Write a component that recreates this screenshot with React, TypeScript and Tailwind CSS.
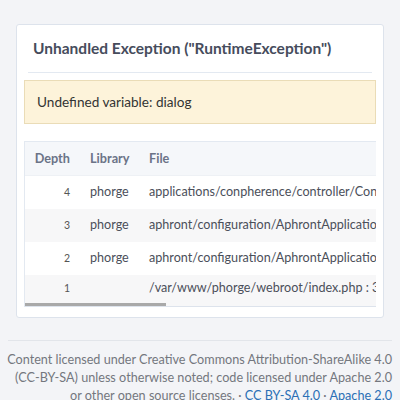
import React from "react";

const rows = [
  { d: "4", lib: "phorge", file: "applications/conpherence/controller/ConpherenceUpdateController.php : 212", bg: "bg-white" },
  { d: "3", lib: "phorge", file: "aphront/configuration/AphrontApplicationConfiguration.php : 293", bg: "bg-[#f7f7f8]" },
  { d: "2", lib: "phorge", file: "aphront/configuration/AphrontApplicationConfiguration.php : 204", bg: "bg-white" },
  { d: "1", lib: "", file: "/var/www/phorge/webroot/index.php : 35", bg: "bg-[#f7f7f8]" },
];

export default function App() {
  return (
    <div className="w-[400px] h-[400px] overflow-hidden bg-[#f3f4f7] font-['Lato','Noto_Sans',sans-serif]">
      <div className="pt-[24px] px-[16px]">
        <div className="bg-white border border-[#dde3ec] rounded-[3px] pb-[10px]">
          <div className="mx-[11px] border-b border-[#e3e9f1] h-[48px] pt-[11px] px-[5px]">
            <h1 className="text-[15.5px] leading-[24px] font-bold text-[#464c5c] whitespace-nowrap">
              Unhandled Exception ("RuntimeException")
            </h1>
          </div>
          <div className="mx-[7px] mt-[7px] h-[44px] bg-[#fdf3da] border border-[#eadcb7] flex items-center pl-[12px] text-[13.6px] text-[#333]">
            Undefined variable: dialog
          </div>
          <div className="mx-[7px] mt-[17px] border-t border-l border-[#e3e9f1] overflow-hidden">
            <div className="flex h-[34px] items-center bg-[#f5f7fa] text-[12.7px] font-bold text-[#6b7387] border-b border-[#eef1f5]">
              <div className="w-[56px] shrink-0 text-right pr-[11px]">Depth</div>
              <div className="w-[59px] shrink-0 pl-[9px]">Library</div>
              <div className="pl-[9px] whitespace-nowrap">File</div>
            </div>
            {rows.map((r, i) => (
              <div
                key={r.d}
                className={`flex items-center ${r.bg} text-[12.6px] text-[#4b4f5a] ${i === 3 ? "h-[27px]" : "h-[33px]"}`}
              >
                <div className="w-[56px] shrink-0 text-right pr-[11px] text-[10.5px] text-[#555]">{r.d}</div>
                <div className="w-[59px] shrink-0 pl-[9px] whitespace-nowrap">{r.lib}</div>
                <div className="pl-[9px] whitespace-nowrap">{r.file}</div>
              </div>
            ))}
            <div className="h-[5px] bg-[#f7f7f8] border-b border-[#dde3ec] relative">
              <div className="absolute left-0 top-[1px] w-[141px] h-[3px] bg-[#a9a9a9]"></div>
            </div>
          </div>
        </div>
      </div>
      <div className="mx-[8px] mt-[22px] border-t border-[#e2e5ea] pt-[10px] flex flex-col items-end text-[12.65px] leading-[18px] text-[#74777e] whitespace-nowrap">
        <span>Content licensed under Creative Commons Attribution-ShareAlike 4.0</span>
        <span>(CC-BY-SA) unless otherwise noted; code licensed under Apache 2.0</span>
        <span>
          or other open source licenses. · <span className="text-[#2a6fb5]">CC BY-SA 4.0</span> · <span className="text-[#2a6fb5]">Apache 2.0</span>
        </span>
      </div>
    </div>
  );
}
